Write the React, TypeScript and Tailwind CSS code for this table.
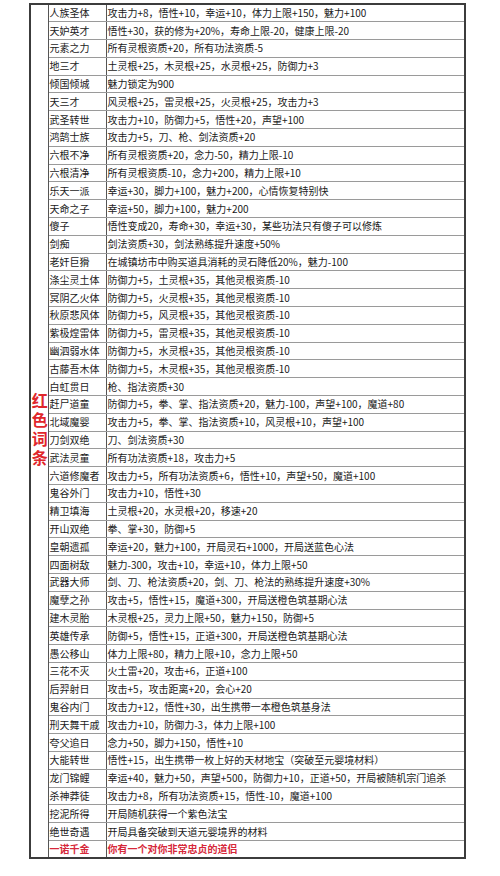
import React from "react";

const rows: [string, string][] = [
  ["人族圣体", "攻击力+8，悟性+10，幸运+10，体力上限+150，魅力+100"],
  ["天妒英才", "悟性+30，获的修为+20%，寿命上限-20，健康上限-20"],
  ["元素之力", "所有灵根资质+20，所有功法资质-5"],
  ["地三才", "土灵根+25，木灵根+25，水灵根+25，防御力+3"],
  ["倾国倾城", "魅力锁定为900"],
  ["天三才", "风灵根+25，雷灵根+25，火灵根+25，攻击力+3"],
  ["武圣转世", "攻击力+10，防御力+5，悟性+20，声望+100"],
  ["鸿鹄士族", "攻击力+5，刀、枪、剑法资质+20"],
  ["六根不净", "所有灵根资质+20，念力-50，精力上限-10"],
  ["六根清净", "所有灵根资质-10，念力+200，精力上限+10"],
  ["乐天一派", "幸运+30，脚力+100，魅力+200，心情恢复特别快"],
  ["天命之子", "幸运+50，脚力+100，魅力+200"],
  ["傻子", "悟性变成20，寿命+30，幸运+30，某些功法只有傻子可以修炼"],
  ["剑痴", "剑法资质+30，剑法熟练提升速度+50%"],
  ["老奸巨猾", "在城镇坊市中购买道具消耗的灵石降低20%，魅力-100"],
  ["涤尘灵土体", "防御力+5，土灵根+35，其他灵根资质-10"],
  ["冥阴乙火体", "防御力+5，火灵根+35，其他灵根资质-10"],
  ["秋原悲风体", "防御力+5，风灵根+35，其他灵根资质-10"],
  ["紫极煌雷体", "防御力+5，雷灵根+35，其他灵根资质-10"],
  ["幽泗弱水体", "防御力+5，水灵根+35，其他灵根资质-10"],
  ["古藤吾木体", "防御力+5，木灵根+35，其他灵根资质-10"],
  ["白虹贯日", "枪、指法资质+30"],
  ["赶尸道童", "防御力+5，拳、掌、指法资质+20，魅力-100，声望+100，魔道+80"],
  ["北域魔婴", "攻击力+5，拳、掌、指法资质+10，风灵根+10，声望+100"],
  ["刀剑双绝", "刀、剑法资质+30"],
  ["武法灵童", "所有功法资质+18，攻击力+5"],
  ["六道修魔者", "攻击力+5，所有功法资质+6，悟性+10，声望+50，魔道+100"],
  ["鬼谷外门", "攻击力+10，悟性+30"],
  ["精卫填海", "土灵根+20，水灵根+20，移速+20"],
  ["开山双绝", "拳、掌+30，防御+5"],
  ["皇朝遗孤", "幸运+20，魅力+100，开局灵石+1000，开局送蓝色心法"],
  ["四面树敌", "魅力-300，攻击+10，幸运+10，体力上限+50"],
  ["武器大师", "剑、刀、枪法资质+20，剑、刀、枪法的熟练提升速度+30%"],
  ["魔孽之孙", "攻击+5，悟性+15，魔道+300，开局送橙色筑基期心法"],
  ["建木灵胎", "木灵根+25，灵力上限+50，魅力+150，防御+5"],
  ["英雄传承", "防御+5，悟性+15，正道+300，开局送橙色筑基期心法"],
  ["愚公移山", "体力上限+80，精力上限+10，念力上限+50"],
  ["三花不灭", "火土雷+20，攻击+6，正道+100"],
  ["后羿射日", "攻击+5，攻击距离+20，会心+20"],
  ["鬼谷内门", "攻击力+12，悟性+30，出生携带一本橙色筑基身法"],
  ["刑天舞干戚", "攻击力+10，防御力-3，体力上限+100"],
  ["夸父追日", "念力+50，脚力+150，悟性+10"],
  ["大能转世", "悟性+15，出生携带一枚上好的天材地宝（突破至元婴境材料）"],
  ["龙门锦鲤", "幸运+40，魅力+50，声望+500，防御力+10，正道+50，开局被随机宗门追杀"],
  ["杀神莽徒", "攻击力+8，所有功法资质+15，悟性-10，魔道+100"],
  ["挖泥所得", "开局随机获得一个紫色法宝"],
  ["绝世奇遇", "开局具备突破到天道元婴境界的材料"],
  ["一诺千金", "你有一个对你非常忠贞的道侣"],
];

export default function App() {
  return (
    <div
      className="w-[500px] h-[876px] bg-white pt-[3px] pl-[29px]"
      style={{ fontFamily: '"Noto Sans CJK SC", "Noto Sans", sans-serif' }}
    >
      <table className="border-collapse w-[437px] table-fixed border-2 border-[#3c3c3c] text-[10px] leading-none text-[#1a1a1a]">
        <colgroup>
          <col className="w-[18px]" />
          <col className="w-[58px]" />
          <col />
        </colgroup>
        <tbody>
          {rows.map(([name, desc], i) => {
            const last = i === rows.length - 1;
            return (
              <tr key={i} className="h-[17.8px]">
                {i === 0 && (
                  <td
                    rowSpan={rows.length}
                    className="border-r border-[#555] p-0 align-middle text-center"
                  >
                    <div className="flex justify-center">
                      <span className="[writing-mode:vertical-rl] text-[16px] leading-[17px] tracking-[3px] font-bold text-[#e0262b]">
                        红色词条
                      </span>
                    </div>
                  </td>
                )}
                <td
                  className={
                    "border-b border-r border-r-[#555] border-b-[#9a9a9a] p-0 pl-px whitespace-nowrap overflow-hidden " +
                    (last ? "text-[#d6283a] font-bold" : "")
                  }
                >
                  {name}
                </td>
                <td
                  className={
                    "border-b border-b-[#9a9a9a] p-0 pl-px whitespace-nowrap overflow-hidden " +
                    (last ? "text-[#d6283a] font-bold" : "")
                  }
                >
                  {desc}
                </td>
              </tr>
            );
          })}
        </tbody>
      </table>
    </div>
  );
}
